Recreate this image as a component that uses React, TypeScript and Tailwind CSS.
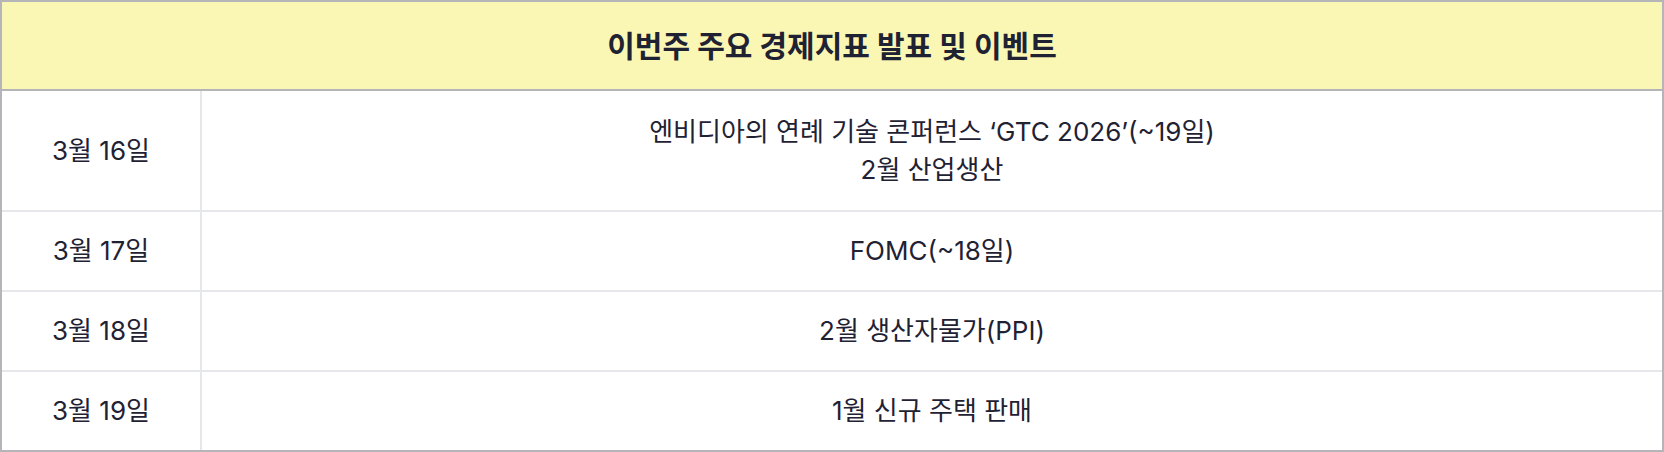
import React from "react";

const rows: { date: string; lines: string[]; h: string }[] = [
  { date: "3월 16일", lines: ["엔비디아의 연례 기술 콘퍼런스 ‘GTC 2026’(~19일)", "2월 산업생산"], h: "h-[121px]" },
  { date: "3월 17일", lines: ["FOMC(~18일)"], h: "h-[80px]" },
  { date: "3월 18일", lines: ["2월 생산자물가(PPI)"], h: "h-[80px]" },
  { date: "3월 19일", lines: ["1월 신규 주택 판매"], h: "h-[78px]" },
];

export default function App() {
  return (
    <div
      className="w-[1664px] h-[452px] bg-white text-[#1f2233]"
      style={{ fontFamily: 'Inter, "Noto Sans CJK KR", sans-serif' }}
    >
      <div className="h-full w-full border-2 border-[#b5b5b9] flex flex-col">
        <div className="h-[89px] shrink-0 bg-[#faf6b4] flex items-center justify-center border-b-2 border-[#b5b5b9]">
          <span className="text-[30px] font-bold leading-none">이번주 주요 경제지표 발표 및 이벤트</span>
        </div>
        {rows.map((r, i) => (
          <div
            key={r.date}
            className={`${r.h} shrink-0 flex ${i < rows.length - 1 ? "border-b-2 border-[#e5e7eb]" : ""}`}
          >
            <div className="w-[200px] shrink-0 flex items-center justify-center border-r-2 border-[#e5e7eb] text-[26px] leading-[38px]">
              {r.date}
            </div>
            <div className="flex-1 flex flex-col items-center justify-center text-[26px] leading-[38px]">
              {r.lines.map((l) => (
                <div key={l}>{l}</div>
              ))}
            </div>
          </div>
        ))}
      </div>
    </div>
  );
}
